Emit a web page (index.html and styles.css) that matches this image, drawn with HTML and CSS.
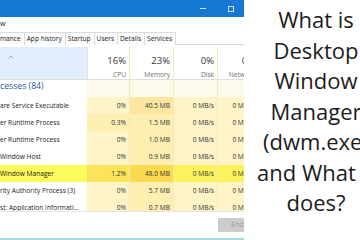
FILE: index.html
```html
<!DOCTYPE html>
<html lang="en">
<head>
  <meta charset="UTF-8" />
  <title>What is Desktop Window Manager (dwm.exe)</title>
  <link rel="stylesheet" href="styles.css">
</head>
<body>
  <div class="page">

    <!-- cropped Task Manager screenshot -->
    <div class="shot">
      <div class="window">
        <div class="titlebar">
          <span class="tb-btn"><span class="tb-min"></span></span>
          <span class="tb-btn"><span class="tb-max"></span></span>
          <span class="tb-btn"></span>
        </div>

        <div class="menubar">w</div>

        <div class="tabs">
          <span class="tab">mance</span>
          <span class="tab">App history</span>
          <span class="tab">Startup</span>
          <span class="tab">Users</span>
          <span class="tab">Details</span>
          <span class="tab">Services</span>
        </div>

        <div class="row head">
          <div class="cell name">
            <svg class="sort" width="6" height="4" viewBox="0 0 6 4"><path d="M0.5 3.5 L3 1 L5.5 3.5" fill="none" stroke="#9a9a9a" stroke-width="0.8"/></svg>
          </div>
          <div class="cell num"><span class="pct">16%</span><span class="label">CPU</span></div>
          <div class="cell num"><span class="pct">23%</span><span class="label">Memory</span></div>
          <div class="cell num"><span class="pct">0%</span><span class="label">Disk</span></div>
          <div class="cell num"><span class="pct">0%</span><span class="label">Network</span></div>
        </div>

        <div class="list">
          <div class="row group">
            <div class="cell name">cesses (84)</div>
            <div class="cell num"></div>
            <div class="cell num"></div>
            <div class="cell num"></div>
            <div class="cell num"></div>
          </div>
          <div class="row">
            <div class="cell name">are Service Executable</div>
            <div class="cell num c0">0%</div>
            <div class="cell num c2">40.5 MB</div>
            <div class="cell num c0">0 MB/s</div>
            <div class="cell num c0">0 Mbps</div>
          </div>
          <div class="row">
            <div class="cell name">er Runtime Process</div>
            <div class="cell num c1">0.3%</div>
            <div class="cell num c1">1.5 MB</div>
            <div class="cell num c0">0 MB/s</div>
            <div class="cell num c0">0 Mbps</div>
          </div>
          <div class="row">
            <div class="cell name">er Runtime Process</div>
            <div class="cell num c0">0%</div>
            <div class="cell num c1">1.0 MB</div>
            <div class="cell num c0">0 MB/s</div>
            <div class="cell num c0">0 Mbps</div>
          </div>
          <div class="row">
            <div class="cell name">Window Host</div>
            <div class="cell num c0">0%</div>
            <div class="cell num c1">0.9 MB</div>
            <div class="cell num c0">0 MB/s</div>
            <div class="cell num c0">0 Mbps</div>
          </div>
          <div class="row hl">
            <div class="cell name">Window Manager</div>
            <div class="cell num c1">1.2%</div>
            <div class="cell num c2">48.0 MB</div>
            <div class="cell num c0">0 MB/s</div>
            <div class="cell num c0">0 Mbps</div>
          </div>
          <div class="row">
            <div class="cell name">rity Authority Process (3)</div>
            <div class="cell num c0">0%</div>
            <div class="cell num c1">5.7 MB</div>
            <div class="cell num c0">0 MB/s</div>
            <div class="cell num c0">0 Mbps</div>
          </div>
          <div class="row">
            <div class="cell name">st: Application Informati…</div>
            <div class="cell num c0">0%</div>
            <div class="cell num c1">0.7 MB</div>
            <div class="cell num c0">0 MB/s</div>
            <div class="cell num c0">0 Mbps</div>
          </div>
        </div>

        <div class="footer">
          <button class="end-btn">End task</button>
        </div>
      </div>
    </div>

    <h1 class="headline">What is<br>Desktop<br>Window<br>Manager<br>(dwm.exe)<br>and What it<br>does?</h1>
  </div>
</body>
</html>
```

FILE: styles.css
```css
* {
  box-sizing: border-box;
}

body {
  margin: 0;
  background: #fff;
  font-family: "Open Sans", Arial, sans-serif;
}

.page {
  display: flex;
  width: 360px;
  height: 240px;
  overflow: hidden;
}

/* screenshot */

.shot {
  flex: 0 0 244px;
  height: 240px;
  overflow: hidden;
}

.window {
  width: 273px;
  height: 240px;
  display: flex;
  flex-direction: column;
  border-bottom: 2px solid #a7d8e2;
  font-size: 6.6px;
  color: #222;
}

.titlebar {
  flex: none;
  height: 17px;
  background: #1778d4;
  display: flex;
  justify-content: flex-end;
}

.tb-btn {
  width: 28px;
  display: flex;
  align-items: center;
  justify-content: center;
}

.tb-min {
  width: 6px;
  height: 1px;
  background: #cfe4f8;
}

.tb-max {
  width: 6px;
  height: 6px;
  border: 1px solid #cfe4f8;
}

.menubar {
  flex: none;
  height: 14px;
  line-height: 14px;
  font-size: 7px;
}

.tabs {
  flex: none;
  height: 14px;
  display: flex;
  border-bottom: 1px solid #d9d9d9;
}

.tab {
  height: 13px;
  margin-top: 1px;
  padding: 0 3px 0 2px;
  line-height: 12px;
  border-top: 1px solid #dcdcdc;
  border-right: 1px solid #dcdcdc;
  background: #fbfbfb;
  white-space: nowrap;
}

.tab:first-child {
  padding-left: 0;
}

/* process table */

.row {
  display: grid;
  grid-template-columns: 87px 42px 44px 44px 44px;
  height: 17px;
  flex: none;
}

.cell {
  line-height: 17px;
  white-space: nowrap;
  overflow: hidden;
}

.cell.num {
  text-align: right;
  padding-right: 3px;
  color: #333;
}

.row .cell.num:last-child {
  padding-right: 6px;
}

.row.head {
  height: 33px;
  margin-top: 2px;
  border-bottom: 1px solid #dedede;
}

.head .name {
  background: #e1eefb;
  padding: 8px 0 0 8px;
  line-height: 0;
}

.head .num {
  border-left: 1px solid #e2e2e2;
  display: flex;
  flex-direction: column;
  align-items: flex-end;
  padding-top: 8px;
  line-height: normal;
}

.head .num:last-child {
  padding-right: 3px;
}

.pct {
  font-size: 9.5px;
  line-height: 12px;
  color: #333;
}

.label {
  margin-top: 3px;
  font-size: 6.6px;
  line-height: 9px;
  color: #707070;
}

.list {
  flex: none;
  height: 132px;
  overflow: hidden;
  border-bottom: 1px solid #e4e4e4;
}

.group .name {
  font-size: 8.7px;
  line-height: 13px;
  color: #2d5ba0;
}

.group .num {
  background: #fffbec;
}

.c0 {
  background: #fff4c8;
}

.c1 {
  background: #fdeeb2;
}

.c2 {
  background: #fce6a0;
}

.row .num + .num {
  border-left: 1px solid #f5e8bb;
}

.hl .name {
  background: #fcfb5c;
}

.hl .c0 {
  background: #fcf35c;
}

.hl .c1 {
  background: #fce45a;
}

.hl .c2 {
  background: #fbda50;
}

.footer {
  flex: none;
  height: 26px;
  display: flex;
  justify-content: flex-end;
  align-items: flex-start;
  padding: 6px 2px 0 0;
}

.end-btn {
  width: 53px;
  height: 14px;
  padding: 0 0 0 13px;
  border: none;
  background: #cccccc;
  color: #9b9b9b;
  font-family: "Open Sans", Arial, sans-serif;
  font-size: 7px;
  line-height: 14px;
  text-align: left;
}

/* title */

.headline {
  flex: 0 0 144px;
  margin: 0;
  padding-top: 4px;
  font-size: 22px;
  font-weight: 400;
  line-height: 30.5px;
  text-align: center;
  white-space: nowrap;
  color: #1c1c1c;
}
```
